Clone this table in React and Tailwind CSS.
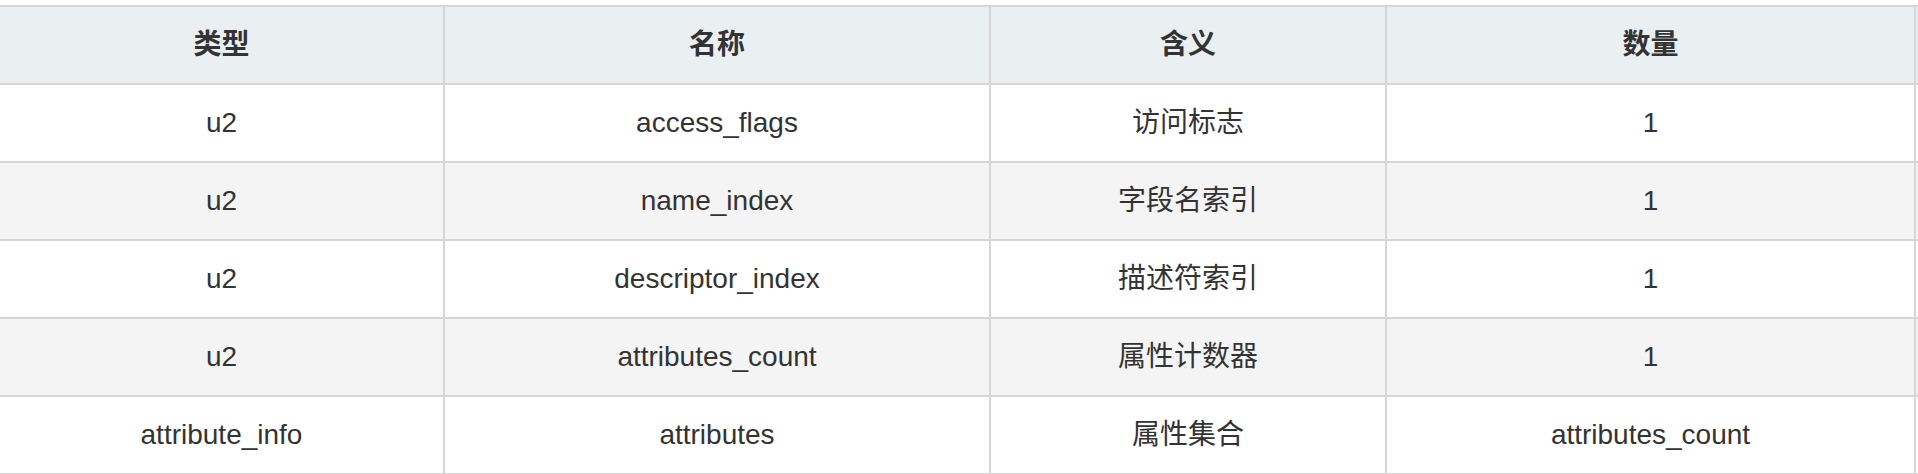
const headers = ["类型", "名称", "含义", "数量"];

const rows = [
  ["u2", "access_flags", "访问标志", "1"],
  ["u2", "name_index", "字段名索引", "1"],
  ["u2", "descriptor_index", "描述符索引", "1"],
  ["u2", "attributes_count", "属性计数器", "1"],
  ["attribute_info", "attributes", "属性集合", "attributes_count"],
];

const widths = ["w-[445px]", "w-[546px]", "w-[396px]", "w-[531px]"];

export default function App() {
  return (
    <div
      className="w-[1918px] h-[474px] overflow-hidden bg-white pt-[5px] text-[#333333]"
      style={{ fontFamily: '"Liberation Sans", Arial, "Noto Sans CJK SC", sans-serif' }}
    >
      <div className="-ml-[2px] w-[1922px] border-t-2 border-[#d6d6d6]">
        <div className="flex bg-[#eaeff2] border-b-2 border-[#d6d6d6]">
          {headers.map((h, i) => (
            <div
              key={h}
              className={`${widths[i]} h-[76px] shrink-0 flex items-center justify-center font-bold text-[28px] border-l-2 border-[#d6d6d6] ${i === 3 ? "border-r-2" : ""}`}
            >
              {h}
            </div>
          ))}
        </div>
        {rows.map((r, ri) => (
          <div
            key={ri}
            className={`flex border-b-2 border-[#d6d6d6] ${ri % 2 === 1 ? "bg-[#f4f4f4]" : "bg-white"}`}
          >
            {r.map((c, i) => (
              <div
                key={i}
                className={`${widths[i]} h-[76px] shrink-0 flex items-center justify-center text-[28px] border-l-2 border-[#d6d6d6] ${i === 3 ? "border-r-2" : ""}`}
              >
                {c}
              </div>
            ))}
          </div>
        ))}
      </div>
    </div>
  );
}
